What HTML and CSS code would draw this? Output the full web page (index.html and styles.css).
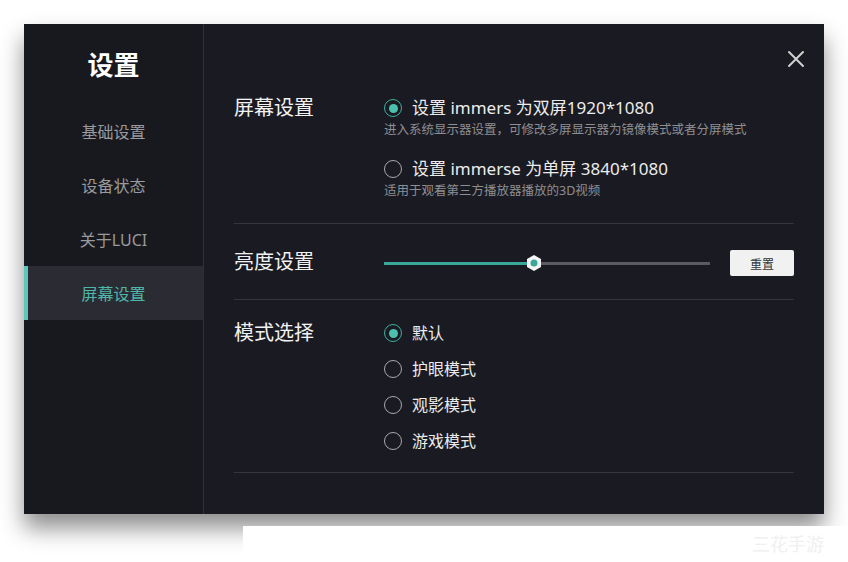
FILE: index.html
```html
<!DOCTYPE html>
<html lang="zh-CN">
<head>
  <meta charset="UTF-8">
  <meta name="viewport" content="width=device-width, initial-scale=1.0">
  <title>设置</title>
  <link rel="stylesheet" href="styles.css">
</head>
<body>

  <div class="window">
    <aside class="sidebar">
      <h1 class="sidebar-title">设置</h1>
      <nav class="nav">
        <a class="nav-item">基础设置</a>
        <a class="nav-item">设备状态</a>
        <a class="nav-item">关于LUCI</a>
        <a class="nav-item active">屏幕设置</a>
      </nav>
    </aside>

    <main class="content">
      <button class="close-btn" aria-label="关闭">
        <svg width="18" height="18" viewBox="0 0 18 18">
          <path d="M2 2L16 16M16 2L2 16" stroke="#d0d0d0" stroke-width="2" stroke-linecap="round"/>
        </svg>
      </button>

      <section class="section section-screen">
        <h2 class="section-label">屏幕设置</h2>
        <div class="section-body">
          <div class="option">
            <div class="radio-row"><span class="radio checked"></span>设置 immers 为双屏1920*1080</div>
            <p class="option-desc">进入系统显示器设置，可修改多屏显示器为镜像模式或者分屏模式</p>
          </div>
          <div class="option">
            <div class="radio-row"><span class="radio"></span>设置 immerse 为单屏 3840*1080</div>
            <p class="option-desc">适用于观看第三方播放器播放的3D视频</p>
          </div>
        </div>
      </section>

      <section class="section section-brightness">
        <h2 class="section-label">亮度设置</h2>
        <div class="section-body brightness">
          <div class="slider">
            <div class="slider-fill" style="width: 46%"></div>
            <span class="slider-thumb" style="left: 46%">
              <svg width="18" height="18" viewBox="0 0 18 18">
                <polygon points="9,1 16,5 16,13 9,17 2,13 2,5" fill="#f4f4f4"/>
                <circle cx="9" cy="9" r="3.5" fill="#3aa898"/>
              </svg>
            </span>
          </div>
          <button class="reset-btn">重置</button>
        </div>
      </section>

      <section class="section section-mode">
        <h2 class="section-label">模式选择</h2>
        <div class="section-body mode-list">
          <div class="radio-row"><span class="radio checked"></span>默认</div>
          <div class="radio-row"><span class="radio"></span>护眼模式</div>
          <div class="radio-row"><span class="radio"></span>观影模式</div>
          <div class="radio-row"><span class="radio"></span>游戏模式</div>
        </div>
      </section>
    </main>
  </div>

  <div class="watermark">三花手游</div>

</body>
</html>
```

FILE: styles.css
```css
body {
  margin: 0;
  background: #fff;
  font-family: "Noto Sans", "Noto Sans CJK SC", sans-serif;
  width: 848px;
  height: 562px;
  overflow: hidden;
  position: relative;
}
.window {
  display: flex;
  margin: 24px;
  width: 800px;
  height: 490px;
  background: #1a1b22;
  box-shadow: 0 14px 22px rgba(0, 0, 0, 0.45);
}
.sidebar {
  width: 179px;
  border-right: 1px solid #2e2f37;
  background: #18191f;
  padding-top: 23px;
}
.sidebar-title {
  margin: 0 0 21px;
  text-align: center;
  color: #fff;
  font-size: 26px;
  line-height: 36px;
  font-weight: 700;
}
.nav {
  display: flex;
  flex-direction: column;
}
.nav-item {
  height: 54px;
  display: flex;
  align-items: center;
  justify-content: center;
  color: #9a9a9c;
  font-size: 16px;
  border-left: 4px solid transparent;
  box-sizing: border-box;
  padding-right: 4px;
}
.nav-item.active {
  background: #2b2c33;
  border-left-color: #5cc7bb;
  color: #4fb7aa;
}
.content {
  flex: 1;
  position: relative;
  padding: 72px 30px 0 30px;
}
.close-btn {
  position: absolute;
  top: 26px;
  right: 19px;
  padding: 0;
  border: 0;
  background: none;
  display: flex;
}
.section {
  display: grid;
  grid-template-columns: 150px 1fr;
  border-bottom: 1px solid #34353d;
}
.section-screen {
  padding-bottom: 24px;
}
.section-brightness {
  padding: 26px 0 23px;
}
.section-mode {
  padding: 21px 0 19px;
}
.section-label {
  margin: 0;
  color: #f2f2f2;
  font-size: 20px;
  line-height: 24px;
  font-weight: 400;
}
.option + .option {
  margin-top: 19px;
}
.radio-row {
  display: flex;
  align-items: center;
  gap: 10px;
  color: #ececec;
  font-size: 16px;
  line-height: 24px;
}
.section-screen .radio-row {
  font-size: 17px;
}
.radio {
  width: 18px;
  height: 18px;
  border: 1px solid #a8a8aa;
  border-radius: 50%;
  box-sizing: border-box;
  display: flex;
  align-items: center;
  justify-content: center;
}
.radio.checked {
  border-color: #3fae9f;
  border-width: 1.5px;
}
.radio.checked::after {
  content: "";
  width: 9px;
  height: 9px;
  border-radius: 50%;
  background: #4cc0ae;
}
.option-desc {
  margin: 2px 0 0;
  color: #8e8e92;
  font-size: 12.5px;
  line-height: 16px;
}
.brightness {
  display: flex;
  align-items: center;
  gap: 20px;
}
.slider {
  flex: 1;
  height: 3px;
  background: #5a5a60;
  position: relative;
}
.slider-fill {
  height: 100%;
  background: #3aa898;
}
.slider-thumb {
  position: absolute;
  top: 50%;
  transform: translate(-50%, -50%);
  display: flex;
}
.reset-btn {
  width: 64px;
  height: 26px;
  border: 0;
  border-radius: 2px;
  background: #f1f1f1;
  color: #333;
  font-family: "Noto Sans CJK SC", sans-serif;
  font-size: 12px;
  padding: 0;
}
.mode-list {
  display: flex;
  flex-direction: column;
  gap: 12px;
}
.watermark {
  position: absolute;
  left: 243px;
  top: 526px;
  right: 0;
  bottom: 0;
  background: #fff;
  color: #f0f0f0;
  font-size: 18px;
  text-align: right;
  padding: 4px 24px 0 0;
  box-sizing: border-box;
}
```
